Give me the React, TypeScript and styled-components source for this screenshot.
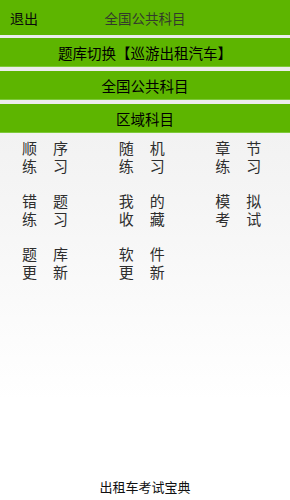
import React from "react";
import styled, { createGlobalStyle } from "styled-components";

const Global = createGlobalStyle`
  html, body { margin: 0; padding: 0; }
  body {
    font-family: "Noto Sans CJK SC", "Noto Sans", sans-serif;
    background: #ffffff;
  }
`;

const Screen = styled.div`
  width: 290px;
  height: 500px;
  display: flex;
  flex-direction: column;
  background: linear-gradient(to bottom, #ececec 0%, #f5f5f5 40%, #ffffff 80%, #ffffff 100%);
  overflow: hidden;
`;

const Header = styled.div`
  height: 35px;
  background: #5db500;
  display: grid;
  grid-template-columns: 60px 1fr 60px;
  align-items: center;
  flex-shrink: 0;
`;

const Back = styled.div`
  padding-left: 10px;
  font-size: 14px;
  color: #0a0a0a;
`;

const Title = styled.div`
  text-align: center;
  font-size: 13.5px;
  color: #333a2c;
`;

const Bars = styled.div`
  display: flex;
  flex-direction: column;
  gap: 4px;
  padding-top: 3px;
  background: #ececec;
`;

const Bar = styled.div`
  height: 28px;
  background: #5db500;
  border-bottom: 1px solid #7ec93a;
  display: flex;
  align-items: center;
  justify-content: center;
  font-size: 14.5px;
  color: #000;
`;

const Grid = styled.div`
  display: grid;
  grid-template-columns: repeat(3, 1fr);
  row-gap: 17px;
  padding-top: 6px;
`;

const Item = styled.div`
  display: flex;
  flex-direction: column;
  padding-left: 22px;
  font-size: 15px;
  line-height: 18px;
  color: #2e2e2e;
`;

const Line = styled.span`
  display: block;
  height: 18px;
  letter-spacing: 16px;
  white-space: nowrap;
`;

const Spacer = styled.div`
  flex: 1;
`;

const Footer = styled.div`
  text-align: center;
  font-size: 13px;
  color: #111;
  padding-bottom: 4px;
  line-height: 18px;
`;

const items = [
  ["顺序", "练习"],
  ["随机", "练习"],
  ["章节", "练习"],
  ["错题", "练习"],
  ["我的", "收藏"],
  ["模拟", "考试"],
  ["题库", "更新"],
  ["软件", "更新"],
];

export default function App() {
  return (
    <Screen>
      <Global />
      <Header>
        <Back>退出</Back>
        <Title>全国公共科目</Title>
        <div />
      </Header>
      <Bars>
        <Bar>题库切换【巡游出租汽车】</Bar>
        <Bar>全国公共科目</Bar>
        <Bar>区域科目</Bar>
      </Bars>
      <Grid>
        {items.map(([a, b], i) => (
          <Item key={i}>
            <Line>{a}</Line>
            <Line>{b}</Line>
          </Item>
        ))}
      </Grid>
      <Spacer />
      <Footer>出租车考试宝典</Footer>
    </Screen>
  );
}
